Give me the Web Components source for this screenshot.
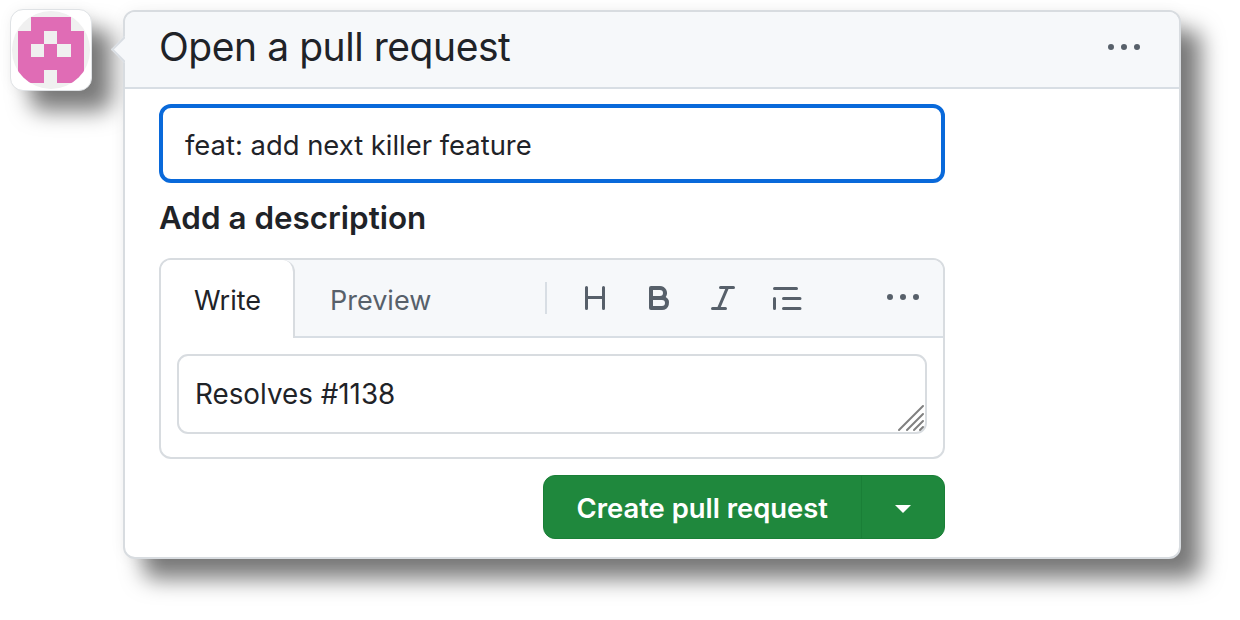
<!DOCTYPE html>
<html lang="en">
<head>
<meta charset="utf-8">
<title>Open a pull request</title>
<style>
  body {
    margin: 0;
    background: #fff;
    color: #1f2328;
    font-family: Inter, "Liberation Sans", sans-serif;
  }
</style>
</head>
<body>
<pr-page>
  <pr-avatar slot="avatar"></pr-avatar>
  <pr-card heading="Open a pull request">
    <title-field value="feat: add next killer feature"></title-field>
    <h-label>Add a description</h-label>
    <md-editor body="Resolves #1138"></md-editor>
    <split-button label="Create pull request"></split-button>
  </pr-card>
</pr-page>

<script>
  const KEBAB = `<svg viewBox="0 0 16 16" width="32" height="32" fill="#57606a"><path d="M8 9a1.5 1.5 0 1 0 0-3 1.5 1.5 0 0 0 0 3ZM1.5 9a1.5 1.5 0 1 0 0-3 1.5 1.5 0 0 0 0 3Zm13 0a1.5 1.5 0 1 0 0-3 1.5 1.5 0 0 0 0 3Z"/></svg>`;

  class PrPage extends HTMLElement {
    constructor() {
      super();
      this.attachShadow({ mode: 'open' });
      this.shadowRoot.innerHTML = `
        <style>
          :host {
            display: flex;
            align-items: flex-start;
            gap: 31px;
            width: 1240px;
            height: 620px;
            box-sizing: border-box;
            padding: 9px 0 0 10px;
            overflow: hidden;
          }
        </style>
        <slot name="avatar"></slot>
        <slot></slot>
      `;
    }
  }

  class PrAvatar extends HTMLElement {
    constructor() {
      super();
      this.attachShadow({ mode: 'open' });
      this.shadowRoot.innerHTML = `
        <style>
          :host {
            display: block;
            flex: none;
            width: 82px;
            height: 82px;
            box-sizing: border-box;
            background: #fff;
            border: 1px solid #dfe2e5;
            border-radius: 13px;
            box-shadow: 20px 20px 22px rgba(0, 0, 0, .52), 0 0 14px rgba(0, 0, 0, .05);
          }
          svg { display: block; }
        </style>
        <svg viewBox="11 10 80 80" width="80" height="80">
          <defs><clipPath id="disc"><circle cx="51" cy="50" r="39"/></clipPath></defs>
          <circle cx="51" cy="50" r="39" fill="#f0f0f0"/>
          <g clip-path="url(#disc)">
            <path fill="#e06cb5" d="M31 17h40v14h13v52H18V31h13Z"/>
            <path fill="#f0f0f0" d="M44 31h13v13H44ZM31 44h13v13H31ZM57 44h14v13H57ZM44 70h13v14H44Z"/>
          </g>
        </svg>
      `;
    }
  }

  class PrCard extends HTMLElement {
    constructor() {
      super();
      this.attachShadow({ mode: 'open' });
      this.shadowRoot.innerHTML = `
        <style>
          :host {
            display: block;
            position: relative;
            flex: none;
            width: 1058px;
            height: 549px;
            margin-top: 1px;
            box-sizing: border-box;
            background: #fff;
            border: 2px solid #d8dce0;
            border-radius: 12px;
            box-shadow: 20px 20px 22px rgba(0, 0, 0, .52), 0 0 16px rgba(0, 0, 0, .05);
          }
          .arrow {
            position: absolute;
            left: -10px;
            top: 28px;
            width: 19px;
            height: 19px;
            box-sizing: border-box;
            background: #f6f8fa;
            border-left: 2px solid #d8dde2;
            border-bottom: 2px solid #d8dde2;
            transform: rotate(45deg);
          }
          header {
            position: relative;
            display: flex;
            align-items: center;
            justify-content: space-between;
            height: 75px;
            padding: 0 39px 0 34px;
            background: #f6f8fa;
            border-bottom: 2px solid #d8dee4;
            border-radius: 10px 10px 0 0;
          }
          h2 {
            margin: -6px 0 0;
            font-size: 39px;
            font-weight: 400;
            letter-spacing: -0.45px;
            color: #1f2328;
          }
          svg { display: block; margin-top: -3px; }
          main {
            width: 786px;
            padding: 15px 0 0 34px;
          }
        </style>
        <div class="arrow"></div>
        <header>
          <h2>${this.getAttribute('heading')}</h2>
          ${KEBAB}
        </header>
        <main><slot></slot></main>
      `;
    }
  }

  class TitleField extends HTMLElement {
    constructor() {
      super();
      this.attachShadow({ mode: 'open' });
      this.shadowRoot.innerHTML = `
        <style>
          :host {
            display: flex;
            align-items: center;
            height: 79px;
            box-sizing: border-box;
            padding: 3px 0 0 22px;
            border: 4px solid #0969da;
            border-radius: 12px;
            font-size: 27.4px;
            color: #1f2328;
          }
        </style>
        <span>${this.getAttribute('value')}</span>
      `;
    }
  }

  class HLabel extends HTMLElement {
    constructor() {
      super();
      this.attachShadow({ mode: 'open' });
      this.shadowRoot.innerHTML = `
        <style>
          :host {
            display: flex;
            align-items: center;
            height: 75px;
            box-sizing: border-box;
            padding-bottom: 5px;
            font-size: 31.4px;
            font-weight: 600;
            color: #1f2328;
          }
        </style>
        <slot></slot>
      `;
    }
  }

  class MdEditor extends HTMLElement {
    constructor() {
      super();
      this.attachShadow({ mode: 'open' });
      this.shadowRoot.innerHTML = `
        <style>
          :host {
            display: block;
            height: 201px;
            box-sizing: border-box;
            background: #fff;
            border: 2px solid #d8dce0;
            border-radius: 12px;
            font-size: 27px;
          }
          .bar {
            display: flex;
            align-items: stretch;
            height: 78px;
            box-sizing: border-box;
            background: #f6f8fa;
            border-radius: 10px 10px 0 0;
          }
          .tab {
            display: flex;
            align-items: center;
            box-sizing: border-box;
            padding-top: 3px;
          }
          .write {
            justify-content: center;
            width: 134px;
            padding-left: 1px;
            background: #fff;
            border-right: 2px solid #d8dce0;
            border-radius: 10px 12px 0 0;
            color: #1f2328;
          }
          .preview {
            width: 136px;
            padding-top: 5px;
            padding-left: 35px;
            color: #57606a;
            border-bottom: 2px solid #d8dee4;
          }
          .tools {
            flex: 1;
            display: flex;
            align-items: center;
            gap: 32px;
            padding-left: 114px;
            padding-right: 24px;
            border-bottom: 2px solid #d8dee4;
            border-radius: 0 10px 0 0;
          }
          .sep {
            width: 2px;
            height: 32px;
            background: #d8dee4;
          }
          .more { margin-left: auto; }
          svg { display: block; flex: none; }
          .box {
            position: relative;
            display: flex;
            align-items: center;
            height: 80px;
            box-sizing: border-box;
            margin: 16px 16px 0;
            padding-left: 16px;
            border: 2px solid #d8dce0;
            border-radius: 11px;
            font-size: 27.8px;
            color: #1f2328;
          }
          .grip {
            position: absolute;
            right: 0;
            bottom: 0;
          }
        </style>
        <div class="bar">
          <div class="tab write">Write</div>
          <div class="tab preview">Preview</div>
          <div class="tools">
            <span class="sep"></span>
            <svg viewBox="0 0 16 16" width="32" height="32" fill="#57606a"><path d="M3.75 2a.75.75 0 0 1 .75.75V7h7V2.75a.75.75 0 0 1 1.5 0v10.5a.75.75 0 0 1-1.5 0V8.5h-7v4.750a.75.75 0 0 1-1.5 0V2.75A.75.75 0 0 1 3.75 2Z"/></svg>
            <svg viewBox="0 0 16 16" width="32" height="32" fill="#57606a"><path d="M4 2h4.5a3.501 3.501 0 0 1 2.852 5.53A3.499 3.499 0 0 1 9.5 14H4a1 1 0 0 1-1-1V3a1 1 0 0 1 1-1Zm1 7v3h4.5a1.5 1.5 0 0 0 0-3Zm3.5-2a1.5 1.5 0 0 0 0-3H5v3Z"/></svg>
            <svg viewBox="0 0 16 16" width="32" height="32" fill="#57606a"><path d="M6 2.75A.75.75 0 0 1 6.75 2h6.5a.75.75 0 0 1 0 1.5h-2.505l-3.858 9H9.25a.75.75 0 0 1 0 1.5h-6.5a.75.75 0 0 1 0-1.5h2.505l3.858-9H6.75A.75.75 0 0 1 6 2.75Z"/></svg>
            <svg viewBox="0 0 32 32" width="32" height="32" stroke="#57606a" stroke-width="3" stroke-linecap="round" fill="none"><path d="M3.5 6.500h22M12.500 16.500h16.500M12.500 26.500h16.500M3.500 16.500v10"/></svg>
            <span class="more">${KEBAB}</span>
          </div>
        </div>
        <div class="box">
          ${this.getAttribute('body')}
          <svg class="grip" width="28" height="28" viewBox="0 0 28 28" stroke="#808080" stroke-width="2" stroke-linecap="round" fill="none"><path d="M2 26 26 2M10 26 26 10M17 26l9-9M23 26l3-3"/></svg>
        </div>
      `;
    }
  }

  class SplitButton extends HTMLElement {
    constructor() {
      super();
      this.attachShadow({ mode: 'open' });
      this.shadowRoot.innerHTML = `
        <style>
          :host {
            display: flex;
            justify-content: flex-end;
            margin-top: 16px;
          }
          .btn {
            display: flex;
            height: 64px;
            box-sizing: border-box;
            background: #1f883d;
            border: 1px solid #1a7f37;
            border-radius: 12px;
            color: #fff;
            font-size: 27.4px;
            font-weight: 600;
          }
          .label {
            display: flex;
            align-items: center;
            padding: 2px 33px 0;
          }
          .drop {
            display: flex;
            align-items: center;
            justify-content: center;
            width: 82px;
            border-left: 1px solid #1a7f37;
          }
          .caret {
            width: 0;
            height: 0;
            margin-top: 3px;
            border: 8px solid transparent;
            border-top-color: #fff;
            border-bottom: 0;
          }
        </style>
        <div class="btn">
          <span class="label">${this.getAttribute('label')}</span>
          <span class="drop"><span class="caret"></span></span>
        </div>
      `;
    }
  }

  customElements.define('pr-page', PrPage);
  customElements.define('pr-avatar', PrAvatar);
  customElements.define('pr-card', PrCard);
  customElements.define('title-field', TitleField);
  customElements.define('h-label', HLabel);
  customElements.define('md-editor', MdEditor);
  customElements.define('split-button', SplitButton);
</script>
</body>
</html>
